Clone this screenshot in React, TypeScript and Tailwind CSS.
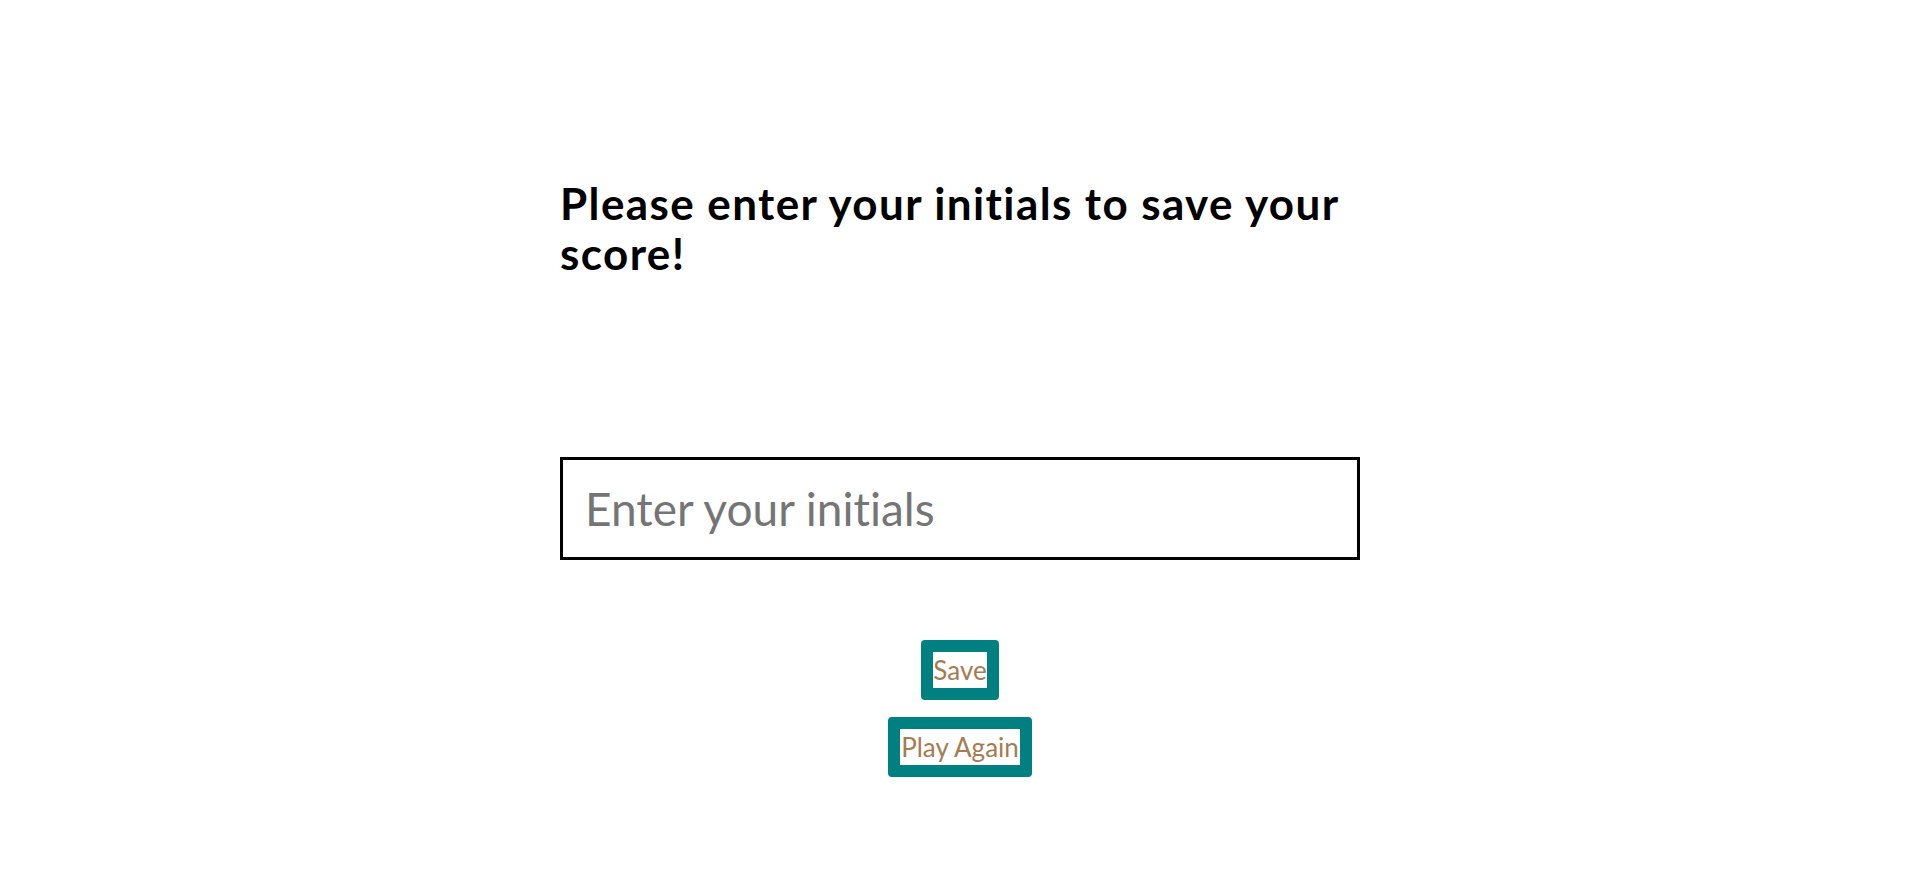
import React from "react";

export default function App() {
  return (
    <div className="min-h-screen w-full bg-white flex justify-center [font-variant-ligatures:none]" style={{ fontFamily: "Lato, 'Open Sans', sans-serif" }}>
      <div className="w-[800px] pt-[178px] flex flex-col">
        <h1 className="text-[44px] leading-[50px] font-bold tracking-[1.4px] text-black m-0">
          Please enter your initials to save your score!
        </h1>
        <input
          type="text"
          placeholder="Enter your initials"
          className="mt-[179px] h-[103px] w-full border-[3px] border-black px-[22px] text-[46px] text-black placeholder:text-[#757575] outline-none bg-white [font-variant-ligatures:none]"
        />
        <div className="mt-[80px] flex flex-col items-center gap-[17px]">
          <button className="h-[60px] w-[78px] rounded-[4px] border-[12px] border-[#008080] bg-white text-[26px] leading-[36px] text-[#a67b52] p-0 flex items-center justify-center">
            Save
          </button>
          <button className="h-[60px] w-[144px] rounded-[4px] border-[12px] border-[#008080] bg-white text-[26px] leading-[36px] text-[#a67b52] p-0 flex items-center justify-center whitespace-nowrap">
            Play Again
          </button>
        </div>
      </div>
    </div>
  );
}
